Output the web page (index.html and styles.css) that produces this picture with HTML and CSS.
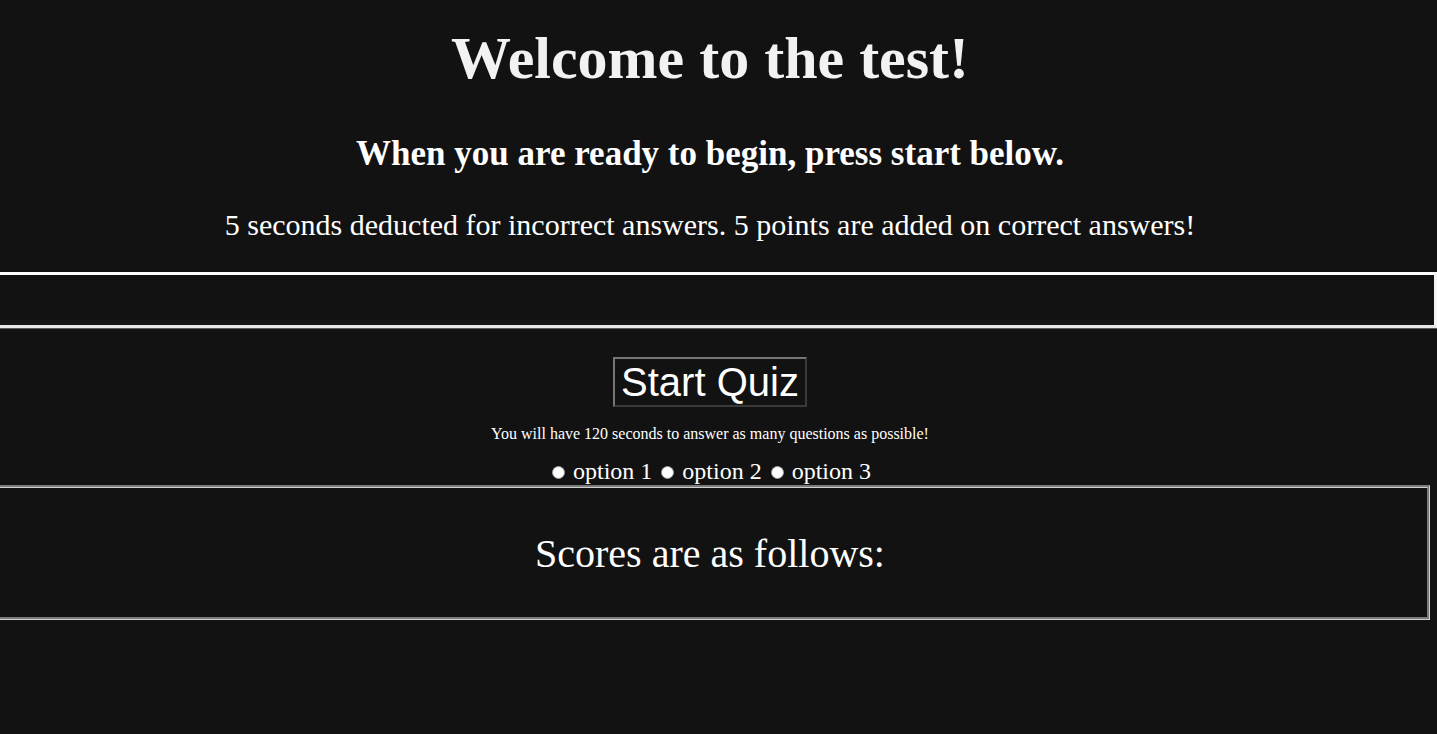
FILE: index.html
```html
<!DOCTYPE html>
<html lang="en">
<head>
<meta charset="utf-8">
<title>Quiz</title>
<link rel="stylesheet" href="styles.css">
</head>
<body>
<div class="wrap">
  <h1 class="title">Welcome to the test!</h1>
  <h2 class="subtitle">When you are ready to begin, press start below.</h2>
  <p class="rules">5 seconds deducted for incorrect answers. 5 points are added on correct answers!</p>
  <div class="question-box"></div>
  <button class="start-btn" type="button">Start Quiz</button>
  <p class="note">You will have 120 seconds to answer as many questions as possible!</p>
  <div class="options">
    <label class="opt"><input type="radio" name="answer" class="radio"> option 1</label>
    <label class="opt"><input type="radio" name="answer" class="radio"> option 2</label>
    <label class="opt"><input type="radio" name="answer" class="radio"> option 3</label>
  </div>
  <div class="scores">
    <p class="scores-title">Scores are as follows:</p>
  </div>
</div>
</body>
</html>
```

FILE: styles.css
```css
html, body {
  margin: 0;
  padding: 0;
  background: #121212;
}
body {
  color: #fff;
  font-family: "Liberation Serif", "Times New Roman", serif;
  height: 734px;
  overflow: hidden;
}
.wrap {
  width: 1440px;
  margin-left: -10px;
  text-align: center;
}
.title {
  font-size: 60px;
  font-weight: bold;
  color: #f2f2f2;
  margin: 24px 0 0;
}
.subtitle {
  font-size: 35px;
  font-weight: bold;
  margin: 41px 0 0;
}
.rules {
  font-size: 30px;
  margin: 34px 0 0;
}
.question-box {
  height: 50px;
  margin: 30px -7px 0 0;
  border-top: 3px solid #fff;
  border-right: 3px solid #f4f4f4;
  border-bottom: 3px solid #e6e6e6;
  box-shadow: 0 1px 0 #5a5a5a;
}
.start-btn {
  display: block;
  margin: 29px auto 0;
  font-family: "Liberation Sans", Arial, sans-serif;
  font-size: 40px;
  line-height: 44px;
  height: 50px;
  padding: 0 6px;
  color: #fff;
  background: #121212;
  border: 2px solid;
  border-color: #767676 #3a3a3a #3a3a3a #767676;
}
.note {
  font-size: 16px;
  margin: 18px 0 0;
}
.options {
  font-size: 24px;
  margin-top: 15px;
  line-height: 27px;
}
.radio {
  appearance: none;
  -webkit-appearance: none;
  width: 13px;
  height: 13px;
  margin: 0 2px 0 3px;
  border-radius: 50%;
  background: #fff;
  border: 1px solid #9a9a9a;
  vertical-align: 0;
}
.scores {
  margin-top: 0;
  padding: 42px 0 40px;
  border: 3px groove #d0d0d0;
}
.scores-title {
  font-size: 40px;
  margin: 0;
}
```
